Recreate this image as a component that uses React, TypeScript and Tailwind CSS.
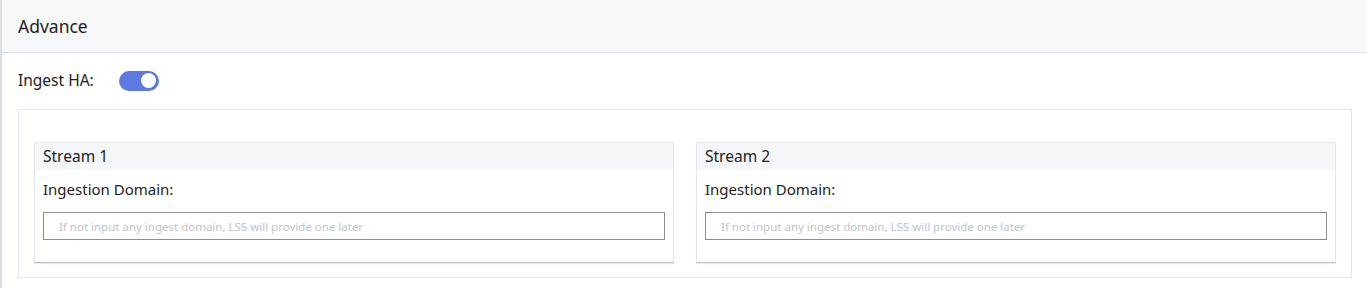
import React from 'react';

const font = { fontFamily: '"Noto Sans", Lato, sans-serif' };

const StreamCard: React.FC<{ title: string }> = ({ title }) => (
  <div className="flex-1 border border-[#e4e7ed] border-b-[#b8bcc4] shadow-[0_1px_1px_rgba(0,0,0,0.08)] bg-white">
    <div className="h-[27px] bg-[#f5f6f8] px-2 flex items-center text-[15.5px] text-[#222]">{title}</div>
    <div className="px-2 pt-[9px] pb-[22px]">
      <div className="text-[15px] text-[#222] leading-[20px]">Ingestion Domain:</div>
      <input
        className="mt-[13px] w-full h-[28px] border border-[#8e8e8e] px-[15px] text-[11.5px] outline-none placeholder:text-[#c0c4cc]"
        placeholder="If not input any ingest domain, LSS will provide one later"
        style={font}
      />
    </div>
  </div>
);

export default function App() {
  return (
    <div className="w-[1367px] h-[288px] bg-white border-l-2 border-[#dcdfe6]" style={font}>
      <div className="h-[53px] bg-[#f7f8fa] border-b border-[#dcdfe6] flex items-center px-4 text-[17.5px] text-[#222]">
        Advance
      </div>
      <div className="pl-4 pr-[15px]">
        <div className="flex items-center h-[56px] pb-[1px]">
          <span className="text-[15.5px] text-[#222] w-[101px]">Ingest HA:</span>
          <div className="w-[40px] h-[20px] rounded-full bg-[#5b7be0] flex items-center justify-end pr-[3px]">
            <div className="w-[15px] h-[15px] rounded-full bg-white" />
          </div>
        </div>
        <div className="border border-[#e4e7ed] pt-[32px] pb-[14px] px-[15px] flex gap-[22px]">
          <StreamCard title="Stream 1" />
          <StreamCard title="Stream 2" />
        </div>
      </div>
    </div>
  );
}
